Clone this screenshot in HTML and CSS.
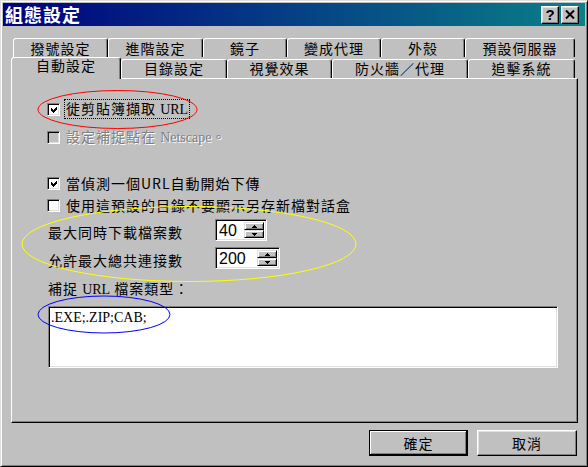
FILE: index.html
```html
<!DOCTYPE html>
<html lang="zh-Hant">
<head>
<meta charset="utf-8">
<title>組態設定</title>
<link rel="stylesheet" href="styles.css">
</head>
<body>
<div class="window">
  <div class="titlebar">
    <span class="title">組態設定</span>
    <div class="tb-btns">
      <span class="tb-btn help">?</span>
      <span class="tb-btn close"><svg width="10" height="9" viewBox="0 0 10 9"><path d="M1 0.5 L9 8.5 M9 0.5 L1 8.5" stroke="#000" stroke-width="2" fill="none"/></svg></span>
    </div>
  </div>
  <div class="content">
    <div class="tabs">
      <div class="tabrow back">
        <div class="tab t-a">撥號設定</div>
        <div class="tab t-b">進階設定</div>
        <div class="tab t-c">鏡子</div>
        <div class="tab t-d">變成代理</div>
        <div class="tab t-e">外殼</div>
        <div class="tab t-f">預設伺服器</div>
      </div>
      <div class="tabrow front">
        <div class="tab active">自動設定</div>
        <div class="tab t-g">目錄設定</div>
        <div class="tab t-h">視覺效果</div>
        <div class="tab t-i">防火牆／代理</div>
        <div class="tab t-j">追擊系統</div>
      </div>
    </div>
    <div class="panel">
      <div class="check r1">
        <span class="box"><svg width="7" height="7" viewBox="0 0 7 7"><polygon points="0,2 2,4 6,0 6,3 2,7 0,5" fill="#000"/></svg></span>
        <span class="label focus">徙剪貼簿擷取 <span class="serif">URL</span></span>
      </div>
      <div class="check r2 disabled">
        <span class="box"></span>
        <span class="label">設定補捉點在 <span class="serif">Netscape</span>。</span>
      </div>
      <div class="check r3">
        <span class="box"><svg width="7" height="7" viewBox="0 0 7 7"><polygon points="0,2 2,4 6,0 6,3 2,7 0,5" fill="#000"/></svg></span>
        <span class="label">當偵測一個URL自動開始下傳</span>
      </div>
      <div class="check r4">
        <span class="box"></span>
        <span class="label">使用這預設的目錄不要顯示另存新檔對話盒</span>
      </div>
      <div class="field s1">
        <span class="flabel">最大同時下載檔案數</span>
        <div class="spin narrow">
          <span class="edit">40</span>
          <span class="arrows">
            <span class="arr"><svg width="5" height="3" viewBox="0 0 5 3"><polygon points="2.5,0 5,3 0,3" fill="#000"/></svg></span>
            <span class="arr"><svg width="5" height="3" viewBox="0 0 5 3"><polygon points="0,0 5,0 2.5,3" fill="#000"/></svg></span>
          </span>
        </div>
      </div>
      <div class="field s2">
        <span class="flabel">允許最大總共連接數</span>
        <div class="spin wide">
          <span class="edit">200</span>
          <span class="arrows">
            <span class="arr"><svg width="5" height="3" viewBox="0 0 5 3"><polygon points="2.5,0 5,3 0,3" fill="#000"/></svg></span>
            <span class="arr"><svg width="5" height="3" viewBox="0 0 5 3"><polygon points="0,0 5,0 2.5,3" fill="#000"/></svg></span>
          </span>
        </div>
      </div>
      <div class="typelabel">補捉 <span class="serif">URL</span> 檔案類型：</div>
      <div class="textarea"><span class="serif big">.EXE;.ZIP;CAB;</span></div>
    </div>
    <div class="buttons">
      <span class="btn default">確定</span>
      <span class="btn">取消</span>
    </div>
  </div>
  <svg class="annot" width="588" height="467" viewBox="0 0 588 467">
    <ellipse cx="117.5" cy="109.5" rx="79.5" ry="19" fill="none" stroke="#ff0000" stroke-width="1"/>
    <ellipse cx="189" cy="244" rx="167" ry="37.5" fill="none" stroke="#ffff00" stroke-width="1"/>
    <ellipse cx="104" cy="314.5" rx="66" ry="18.5" fill="none" stroke="#0000ff" stroke-width="1"/>
  </svg>
</div>
</body>
</html>
```
FILE: styles.css
```css
* { box-sizing: border-box; margin: 0; padding: 0; }
html, body { background: #c0c0c0; }
body {
  margin: 0;
  font-family: "Noto Sans CJK TC", "Noto Sans CJK SC", sans-serif;
  font-size: 14px;
  letter-spacing: 1px;
  color: #000;
}
.window {
  position: relative;
  width: 588px;
  height: 467px;
  background: #c0c0c0;
  border: 1px solid;
  border-color: #dfdfdf #000 #000 #dfdfdf;
  box-shadow: inset 1px 1px #fff, inset -1px -1px #808080;
  padding: 2px;
  display: flex;
  flex-direction: column;
}
.titlebar {
  height: 23px;
  display: flex;
  align-items: center;
  justify-content: space-between;
  background: linear-gradient(to right, #000080, #0a8088);
  padding: 0 6px 0 2px;
}
.title {
  color: #fff;
  font-weight: bold;
  font-size: 18px;
  line-height: 23px;
  letter-spacing: 1px;
}
.tb-btns { display: flex; gap: 2px; }
.tb-btn {
  width: 18px;
  height: 18px;
  background: #c0c0c0;
  border: 1px solid;
  border-color: #fff #000 #000 #fff;
  box-shadow: inset -1px -1px #808080, inset 1px 1px #dfdfdf;
  display: flex;
  align-items: center;
  justify-content: center;
}
.help {
  font-family: "Liberation Sans", sans-serif;
  font-weight: bold;
  font-size: 15px;
  line-height: 16px;
  letter-spacing: 0;
}
.content {
  flex: 1;
  display: flex;
  flex-direction: column;
  padding: 12px 7px 0 8px;
}
.tabs { display: flex; flex-direction: column; }
.tabrow { display: flex; }
.tabrow.back { margin-left: 2px; height: 19px; }
.tabrow.front { height: 21px; align-items: flex-end; }
.tab {
  background: #c0c0c0;
  border: 1px solid;
  border-bottom: none;
  border-color: #fff #000 transparent #fff;
  border-radius: 3px 3px 0 0;
  box-shadow: inset -1px 0 #808080;
  text-align: center;
  white-space: nowrap;
}
.back .tab { height: 19px; line-height: 16px; padding-top: 1px; }
.front .tab { height: 19px; line-height: 14px; padding-top: 1px; }
.front .tab.active {
  width: 110px;
  height: 22px;
  margin-bottom: -1px;
  position: relative;
  z-index: 2;
  padding-top: 0;
}
.t-a { width: 95px; }
.t-b { width: 95px; }
.t-c { width: 84px; }
.t-d { width: 94px; }
.t-e { width: 84px; }
.t-f { width: 110px; }
.t-g { width: 106px; }
.t-h { width: 105px; }
.t-i { width: 136px; }
.t-j { width: 107px; }

.panel {
  height: 345px;
  border: 1px solid;
  border-color: #fff #000 #000 #fff;
  box-shadow: inset -1px -1px #808080;
  padding: 21px 0 0 35px;
  display: flex;
  flex-direction: column;
  align-items: flex-start;
}
.check { display: flex; align-items: center; height: 18px; }
.r2 { margin-top: 10px; }
.r3 { margin-top: 28px; }
.r4 { margin-top: 4px; }
.box {
  width: 13px;
  height: 13px;
  flex: none;
  background: #fff;
  border: 1px solid;
  border-color: #808080 #fff #fff #808080;
  box-shadow: inset 1px 1px #000, inset -1px -1px #dfdfdf;
  display: flex;
  align-items: center;
  justify-content: center;
}
.box svg { shape-rendering: crispEdges; margin: 1px 0 0 1px; }
.label {
  margin-left: 4px;
  line-height: 16px;
  padding: 0 1px;
  border: 1px solid transparent;
  white-space: nowrap;
}
.label.focus { border: 1px dotted #000; }
.disabled .box { background: #c0c0c0; }
.disabled .label { color: #808080; text-shadow: 1px 1px #fff; }
.serif {
  font-family: "Liberation Serif", serif;
  font-size: 14px;
  letter-spacing: 0;
}
.serif.big { font-size: 14px; }

.field { display: flex; align-items: center; height: 22px; margin-left: 1px; }
.s1 { margin-top: 5px; }
.s2 { margin-top: 6px; }
.flabel { width: 167px; white-space: nowrap; padding-top: 3px; }
.spin {
  display: flex;
  height: 22px;
  background: #fff;
  border: 1px solid;
  border-color: #808080 #fff #fff #808080;
  box-shadow: inset 1px 1px #000, inset -1px -1px #dfdfdf;
  padding: 2px 2px 2px 2px;
}
.spin.narrow { width: 52px; }
.spin.wide { width: 65px; }
.edit {
  flex: 1;
  font-family: "Liberation Sans", sans-serif;
  font-size: 16px;
  line-height: 18px;
  letter-spacing: 0;
  padding-left: 1px;
}
.arrows { display: flex; flex-direction: column; width: 20px; }
.arr {
  height: 9px;
  background: #c0c0c0;
  border: 1px solid;
  border-color: #dfdfdf #000 #000 #dfdfdf;
  box-shadow: inset 1px 1px #fff, inset -1px -1px #808080;
  display: flex;
  align-items: center;
  justify-content: center;
}
.arr svg { shape-rendering: crispEdges; }
.typelabel { margin-top: 10px; margin-left: 1px; height: 18px; line-height: 18px; white-space: nowrap; }
.textarea {
  margin-top: 9px;
  margin-left: 1px;
  width: 510px;
  height: 62px;
  background: #fff;
  border: 1px solid;
  border-color: #808080 #fff #fff #808080;
  box-shadow: inset 1px 1px #000, inset -1px -1px #dfdfdf;
  padding: 1px 2px;
  line-height: 16px;
}
.buttons {
  display: flex;
  justify-content: flex-end;
  gap: 9px;
  margin-top: 7px;
  padding-right: 1px;
}
.btn {
  width: 100px;
  height: 26px;
  background: #c0c0c0;
  border: 1px solid;
  border-color: #fff #000 #000 #fff;
  box-shadow: inset -1px -1px #808080, inset 1px 1px #dfdfdf;
  display: flex;
  align-items: center;
  justify-content: center;
  line-height: 16px;
}
.btn.default {
  width: 99px;
  border-color: #000;
  box-shadow: inset -1px -1px #000, inset 1px 1px #fff, inset -2px -2px #808080;
}
.annot {
  position: absolute;
  left: -1px;
  top: -1px;
  pointer-events: none;
}
```
